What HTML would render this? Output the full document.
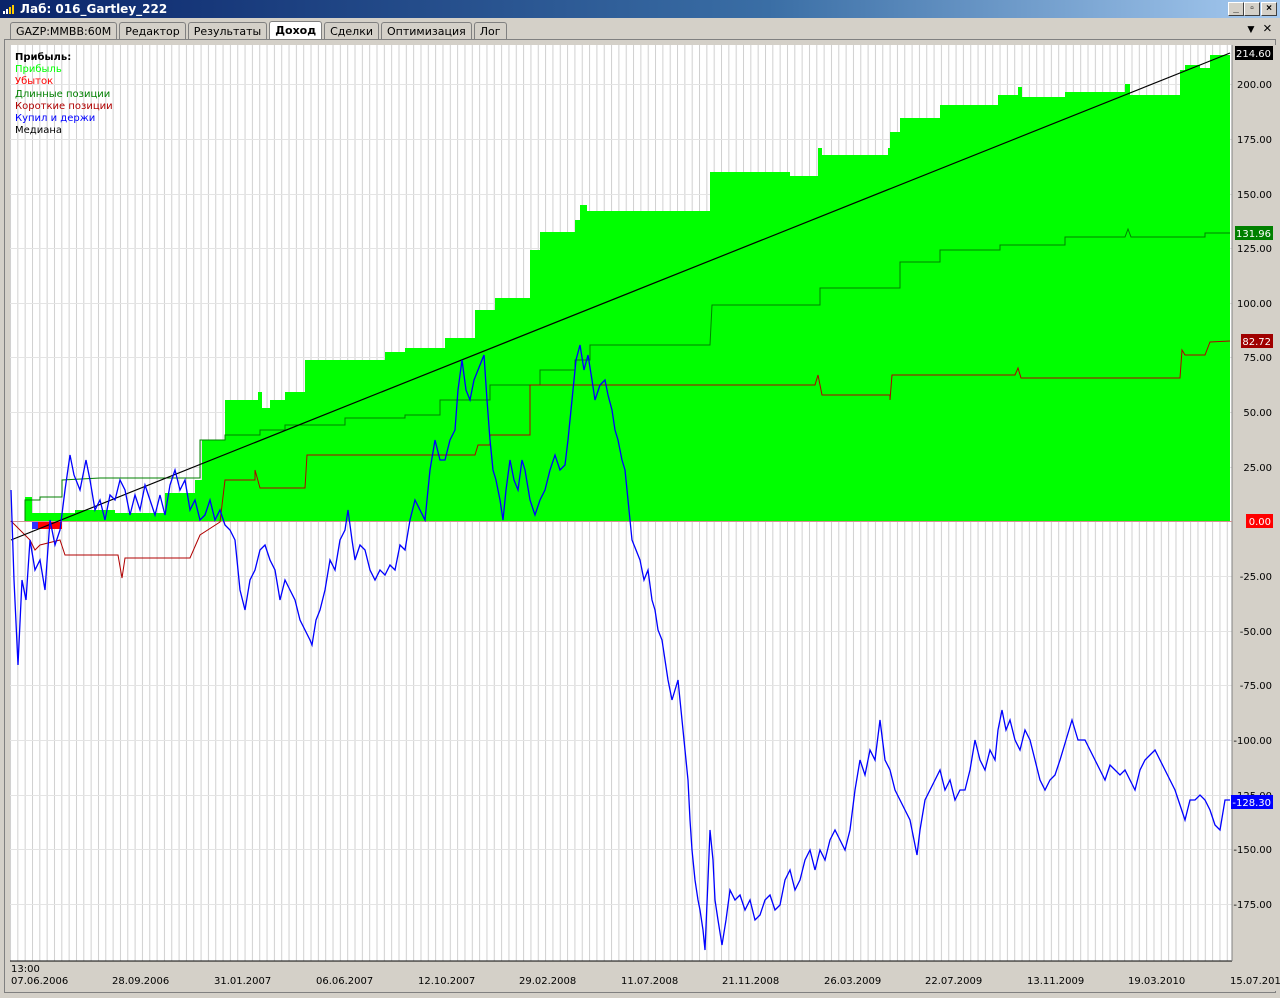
<!DOCTYPE html>
<html><head><meta charset="utf-8"><style>
*{margin:0;padding:0;box-sizing:border-box}
body{width:1280px;height:998px;background:#d4d0c8;font-family:"Liberation Sans","DejaVu Sans",sans-serif;position:relative;overflow:hidden}
.title{position:absolute;left:0;top:0;width:1280px;height:18px;background:linear-gradient(90deg,#0a246a,#3a6ea5 60%,#a6caf0);color:#fff;font:bold 12px "DejaVu Sans",sans-serif;line-height:18px;padding-left:20px}
.btn{position:absolute;top:2px;width:16px;height:14px;background:#d4d0c8;border:1px solid;border-color:#fff #404040 #404040 #fff;font:bold 10px sans-serif;color:#000;text-align:center;line-height:12px}
.tabs{position:absolute;top:21px;left:10px;height:18px;display:flex}
.tab{font:11px "DejaVu Sans",sans-serif;padding:0 5px;height:17px;line-height:17px;border:1px solid #808080;border-bottom:none;background:#d4d0c8;margin-right:2px;margin-top:1px;border-radius:3px 3px 0 0}
.tab.a{background:#fff;font-weight:bold;margin-top:0;height:18px}
svg text{font-family:"DejaVu Sans",sans-serif;font-size:10px}
</style></head><body>
<div class="title">Лаб: 016_Gartley_222
<svg style="position:absolute;left:2px;top:3px" width="14" height="12"><rect x="1" y="8" width="2" height="3" fill="#fff"/><rect x="4" y="6" width="2" height="5" fill="#fff"/><rect x="7" y="4" width="2" height="7" fill="#fc0"/><rect x="10" y="2" width="2" height="9" fill="#fc0"/></svg></div>
<div class="btn" style="left:1228px">_</div><div class="btn" style="left:1244px">▫</div><div class="btn" style="left:1261px">×</div>
<div style="position:absolute;left:1245px;top:22px;font:12px sans-serif">▼</div>
<div style="position:absolute;left:1263px;top:20px;font:15px sans-serif">×</div>
<div class="tabs"><div class="tab">GAZP:MMBB:60M</div><div class="tab">Редактор</div><div class="tab">Результаты</div><div class="tab a">Доход</div><div class="tab">Сделки</div><div class="tab">Оптимизация</div><div class="tab">Лог</div></div>
<div style="position:absolute;left:4px;top:39px;width:1272px;height:954px;border:1px solid #808080;background:#d4d0c8"></div>
<svg style="position:absolute;left:0;top:0" width="1280" height="998">
<defs><pattern id="vg" x="10" y="0" width="7.33" height="10" patternUnits="userSpaceOnUse"><rect x="0" y="0" width="1" height="10" fill="#d0d0d0"/></pattern></defs>
<rect x="10" y="45" width="1222" height="916" fill="#fff"/>
<rect x="10" y="45" width="1222" height="916" fill="url(#vg)"/>
<g stroke="#e4e4e4" stroke-width="1">
<line x1="10" x2="1232" y1="84.5" y2="84.5"/><line x1="10" x2="1232" y1="139.5" y2="139.5"/><line x1="10" x2="1232" y1="194.5" y2="194.5"/><line x1="10" x2="1232" y1="248.5" y2="248.5"/><line x1="10" x2="1232" y1="303.5" y2="303.5"/><line x1="10" x2="1232" y1="357.5" y2="357.5"/><line x1="10" x2="1232" y1="412.5" y2="412.5"/><line x1="10" x2="1232" y1="467.5" y2="467.5"/><line x1="10" x2="1232" y1="576.5" y2="576.5"/><line x1="10" x2="1232" y1="631.5" y2="631.5"/><line x1="10" x2="1232" y1="685.5" y2="685.5"/><line x1="10" x2="1232" y1="740.5" y2="740.5"/><line x1="10" x2="1232" y1="795.5" y2="795.5"/><line x1="10" x2="1232" y1="849.5" y2="849.5"/><line x1="10" x2="1232" y1="904.5" y2="904.5"/></g>
<rect x="1232" y="45" width="44" height="916" fill="#d4d0c8"/>
<rect x="10" y="961" width="1266" height="30" fill="#d4d0c8"/>
<line x1="10" x2="1232" y1="961" y2="961" stroke="#000"/>
<line x1="1232" x2="1232" y1="45" y2="961" stroke="#808080"/>
<polygon fill="#00ff00" points="25,521 25,497 32,497 32,513 75,513 75,510 115,510 115,513 165,513 165,493 195,493 195,480 202,480 202,440 225,440 225,400 258,400 258,392 262,392 262,408 270,408 270,400 285,400 285,392 305,392 305,360 385,360 385,352 405,352 405,348 445,348 445,338 475,338 475,310 495,310 495,298 530,298 530,250 540,250 540,232 575,232 575,220 580,220 580,205 587,205 587,211 710,211 710,172 790,172 790,176 818,176 818,148 822,148 822,155 888,155 888,148 890,148 890,132 900,132 900,118 940,118 940,105 998,105 998,95 1018,95 1018,87 1022,87 1022,97 1065,97 1065,92 1125,92 1125,84 1130,84 1130,95 1180,95 1180,70 1185,70 1185,65 1200,65 1200,68 1210,68 1210,55 1230,55 1230,521"/>
<rect x="32" y="521" width="30" height="8" fill="#ff0000"/>
<rect x="32" y="521" width="6" height="8" fill="#3030ff"/>
<line x1="10" x2="1232" y1="521.5" y2="521.5" stroke="#d09090"/>
<polyline fill="none" stroke="#008000" stroke-width="1" points="25,521 25,500 40,500 40,497 62,497 62,480 100,478 165,478 200,478 200,440 225,440 225,435 260,435 260,430 285,430 285,425 345,425 345,418 405,418 405,415 440,415 440,400 490,400 490,385 540,385 540,370 575,370 575,360 590,360 590,345 710,345 712,305 790,305 820,305 820,288 900,288 900,262 940,262 940,250 1000,250 1000,245 1065,245 1065,237 1125,237 1128,229 1131,237 1205,237 1205,233 1230,233"/>
<polyline fill="none" stroke="#b00000" stroke-width="1" points="11,521 30,540 35,550 40,545 60,540 65,555 118,555 122,578 125,558 190,558 200,535 220,522 225,480 255,480 255,470 260,488 305,488 307,455 475,455 478,445 490,445 490,435 530,435 530,385 575,385 815,385 818,375 822,395 890,395 890,400 892,375 1015,375 1018,368 1021,378 1180,378 1182,350 1185,355 1205,355 1210,342 1230,341"/>
<line x1="11" y1="540" x2="1230" y2="53" stroke="#000" stroke-width="1.2"/>
<polyline fill="none" stroke="#0000ff" stroke-width="1.3" points="11,490 14,580 18,665 22,580 26,600 30,540 35,570 40,560 45,590 50,520 55,545 60,530 65,490 70,455 74,475 80,490 86,460 90,480 95,510 100,500 105,520 110,495 115,500 120,480 125,490 130,515 135,495 140,510 145,485 150,500 155,515 160,495 165,515 170,485 175,470 180,490 185,480 190,510 195,500 200,520 205,515 210,500 215,520 220,510 225,525 230,530 235,540 240,590 245,610 250,580 255,570 260,550 265,545 270,560 275,570 280,600 285,580 290,590 295,600 300,620 305,630 310,640 312,645 316,620 320,610 325,590 330,560 335,570 340,540 345,530 348,510 352,540 355,560 360,545 365,550 370,570 375,580 380,570 385,575 390,565 395,570 400,545 405,550 410,520 415,500 420,510 425,520 430,470 435,440 440,460 445,460 450,440 455,430 458,390 462,360 466,390 470,400 474,380 478,370 482,360 484,355 487,400 490,440 493,470 496,480 500,500 503,520 506,490 510,460 514,480 518,490 522,460 525,470 530,500 535,515 540,500 545,490 550,470 555,455 560,470 565,465 568,440 572,400 576,360 580,345 584,370 588,355 592,380 595,400 600,385 605,380 608,395 612,410 615,430 618,440 622,460 625,470 628,500 632,540 636,550 640,560 644,580 648,570 652,600 655,610 658,630 662,640 665,660 668,680 672,700 675,690 678,680 680,700 683,730 685,750 688,780 690,820 692,850 695,880 698,900 700,910 703,930 705,950 708,880 710,830 713,860 715,900 718,920 722,945 726,920 730,890 735,900 740,895 745,910 750,900 755,920 760,915 765,900 770,895 775,910 780,905 785,880 790,870 795,890 800,880 805,860 810,850 815,870 820,850 825,860 830,840 835,830 840,840 845,850 850,830 855,790 860,760 865,775 870,750 875,760 880,720 885,760 890,770 895,790 900,800 905,810 910,820 914,840 917,855 920,830 925,800 930,790 935,780 940,770 945,790 950,780 955,800 960,790 965,790 970,770 975,740 980,760 985,770 990,750 995,760 998,730 1002,710 1006,730 1010,720 1015,740 1020,750 1025,730 1030,740 1035,760 1040,780 1045,790 1050,780 1055,775 1060,760 1066,740 1072,720 1078,740 1085,740 1090,750 1095,760 1100,770 1105,780 1110,765 1115,770 1120,775 1125,770 1130,780 1135,790 1140,770 1145,760 1150,755 1155,750 1160,760 1165,770 1170,780 1175,790 1180,805 1185,820 1190,800 1195,800 1200,795 1205,800 1210,810 1215,825 1220,830 1225,800 1230,800"/>
<g font-size="10" fill="#000">
<text x="15" y="60" font-weight="bold">Прибыль:</text>
<text x="15" y="72" fill="#00ff00">Прибыль</text>
<text x="15" y="84" fill="#ff0000">Убыток</text>
<text x="15" y="97" fill="#008000">Длинные позиции</text>
<text x="15" y="109" fill="#b00000">Короткие позиции</text>
<text x="15" y="121" fill="#0000ff">Купил и держи</text>
<text x="15" y="133">Медиана</text>
</g>
<g font-size="10" text-anchor="end" fill="#000">
<text x="1272" y="88">200.00</text><text x="1272" y="143">175.00</text><text x="1272" y="198">150.00</text><text x="1272" y="252">125.00</text><text x="1272" y="307">100.00</text><text x="1272" y="361">75.00</text><text x="1272" y="416">50.00</text><text x="1272" y="471">25.00</text><text x="1272" y="580">-25.00</text><text x="1272" y="635">-50.00</text><text x="1272" y="689">-75.00</text><text x="1272" y="744">-100.00</text><text x="1272" y="799">-125.00</text><text x="1272" y="853">-150.00</text><text x="1272" y="908">-175.00</text>
</g>
<rect x="1235" y="46" width="38" height="14" fill="#000"/><text x="1271" y="57" text-anchor="end" fill="#fff">214.60</text>
<rect x="1235" y="226" width="38" height="14" fill="#008000"/><text x="1271" y="237" text-anchor="end" fill="#fff">131.96</text>
<rect x="1241" y="334" width="32" height="14" fill="#a00000"/><text x="1271" y="345" text-anchor="end" fill="#fff">82.72</text>
<rect x="1246" y="514" width="27" height="14" fill="#ff0000"/><text x="1271" y="525" text-anchor="end" fill="#fff">0.00</text>
<rect x="1231" y="795" width="42" height="14" fill="#0000ff"/><text x="1271" y="806" text-anchor="end" fill="#fff">-128.30</text>
<g font-size="10" fill="#000">
<text x="11" y="972">13:00</text>
<text x="11" y="984">07.06.2006</text><text x="112" y="984">28.09.2006</text><text x="214" y="984">31.01.2007</text><text x="316" y="984">06.06.2007</text><text x="418" y="984">12.10.2007</text><text x="519" y="984">29.02.2008</text><text x="621" y="984">11.07.2008</text><text x="722" y="984">21.11.2008</text><text x="824" y="984">26.03.2009</text><text x="925" y="984">22.07.2009</text><text x="1027" y="984">13.11.2009</text><text x="1128" y="984">19.03.2010</text><text x="1230" y="984">15.07.2010</text>
</g>
</svg>
</body></html>
